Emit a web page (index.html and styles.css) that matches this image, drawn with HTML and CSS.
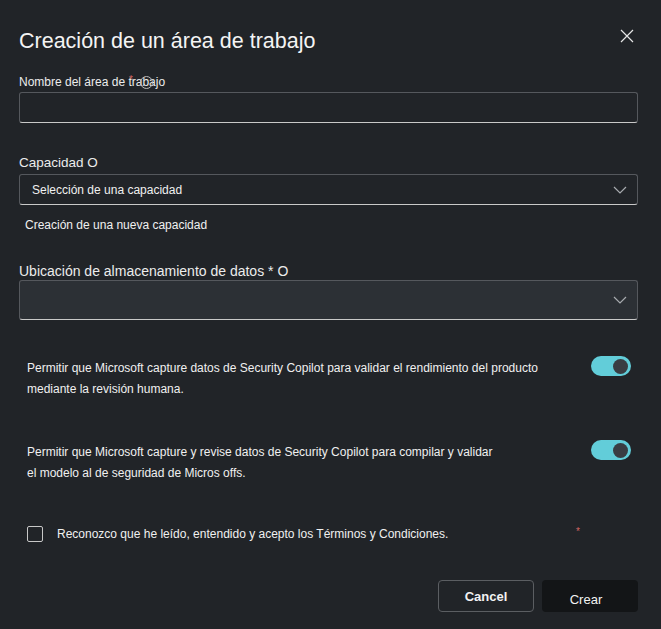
FILE: index.html
```html
<!DOCTYPE html>
<html lang="es">
<head>
  <meta charset="UTF-8">
  <title>Creación de un área de trabajo</title>
  <link rel="stylesheet" href="styles.css">
</head>
<body>
  <div class="dialog">
    <div class="dialog-header">
      <h1 class="dialog-title">Creación de un área de trabajo</h1>
      <button class="close-btn" aria-label="Cerrar">
        <svg width="14" height="14" viewBox="0 0 14 14"><path d="M1 1L13 13M13 1L1 13" stroke="#e6e6e6" stroke-width="1.2" fill="none"/></svg>
      </button>
    </div>

    <!-- Nombre -->
    <div class="field field-name">
      <label class="field-label small">Nombre del área de trabajo
        <span class="req-mark">*</span>
        <span class="info-icon"></span>
      </label>
      <input class="text-input" type="text">
    </div>

    <!-- Capacidad -->
    <div class="field field-capacity">
      <label class="field-label">Capacidad O</label>
      <div class="select">
        <span class="select-value">Selección de una capacidad</span>
        <svg class="chevron" width="14" height="8" viewBox="0 0 14 8"><path d="M1 1L7 7L13 1" stroke="#a8abaf" stroke-width="1.2" fill="none"/></svg>
      </div>
      <div class="helper">Creación de una nueva capacidad</div>
    </div>

    <!-- Ubicacion -->
    <div class="field field-location">
      <label class="field-label large">Ubicación de almacenamiento de datos * O</label>
      <div class="select select-tall">
        <span class="select-value"></span>
        <svg class="chevron" width="14" height="8" viewBox="0 0 14 8"><path d="M1 1L7 7L13 1" stroke="#a8abaf" stroke-width="1.2" fill="none"/></svg>
      </div>
    </div>

    <!-- Toggles -->
    <div class="toggle-row first">
      <p class="toggle-text">Permitir que Microsoft capture datos de Security Copilot para validar el rendimiento del producto<br>mediante la revisión humana.</p>
      <span class="toggle"><span class="knob"></span></span>
    </div>
    <div class="toggle-row second">
      <p class="toggle-text">Permitir que Microsoft capture y revise datos de Security Copilot para compilar y validar<br>el modelo al de seguridad de Micros offs.</p>
      <span class="toggle"><span class="knob"></span></span>
    </div>

    <div class="check-row">
      <span class="checkbox"></span>
      <span class="check-text">Reconozco que he leído, entendido y acepto los Términos y Condiciones.</span>
      <span class="check-req">*</span>
    </div>

    <div class="actions">
      <button class="btn btn-cancel">Cancel</button>
      <button class="btn btn-create">Crear</button>
    </div>
  </div>
</body>
</html>
```

FILE: styles.css
```css
body { margin: 0; background: #212428; color: #f0f0f0; font-family: "Liberation Sans", Arial, sans-serif; }
.dialog { width: 661px; height: 629px; box-sizing: border-box; padding: 0 23px 0 19px; }

.dialog-header { display: flex; justify-content: space-between; align-items: flex-start; padding-top: 29px; }
.dialog-title { margin: 0; font-weight: normal; font-size: 21.5px; line-height: 24px; color: #f4f4f4; }
.close-btn { background: none; border: none; padding: 0; margin: 0 4px 0 0; width: 14px; height: 14px; display: flex; cursor: pointer; }

.field-label { display: block; position: relative; font-size: 13.5px; line-height: 16px; color: #ececec; }
.field-label.small { font-size: 12px; }
.field-label.large { font-size: 14px; }
.req-mark { position: absolute; left: 110px; top: -2px; color: #d06464; font-size: 10px; }
.info-icon { position: absolute; left: 121px; top: 1.5px; width: 11px; height: 11px; border: 1.3px solid #b9b9b9; border-radius: 50%; }

.field-name { margin-top: 21px; }
.field-name .field-label { margin-bottom: 2px; }
.text-input { display: block; width: 100%; height: 31px; box-sizing: border-box; background: transparent; border: 1px solid #55585d; border-bottom-color: #c9c9c9; border-radius: 3px; color: #f0f0f0; }

.field-capacity { margin-top: 32px; }
.field-capacity .field-label { margin-bottom: 3px; }
.select { display: flex; align-items: center; justify-content: space-between; height: 31px; box-sizing: border-box; padding: 0 10px 0 12px; border: 1px solid #55585d; border-bottom-color: #c9c9c9; border-radius: 3px; }
.select-value { font-size: 12px; color: #f0f0f0; }
.select-tall { height: 40px; background: #2c3035; }
.helper { font-size: 12px; margin: 12px 0 0 6px; line-height: 16px; }

.field-location { margin-top: 29px; }
.field-location .field-label { margin-bottom: 0; line-height: 18px; }

.toggle-row { display: flex; justify-content: space-between; align-items: flex-start; padding: 0 7px 0 8px; }
.toggle-row.first { margin-top: 38px; }
.toggle-row.second { margin-top: 42px; }
.toggle-text { margin: 0; font-size: 12px; line-height: 21px; color: #f0f0f0; }
.toggle { display: flex; align-items: center; justify-content: flex-end; width: 40px; height: 20px; margin-top: -2px; box-sizing: border-box; padding: 0 3px; background: #62cdd9; border-radius: 10px; }
.toggle .knob { width: 15px; height: 15px; border-radius: 50%; background: #393d43; }

.check-row { position: relative; display: flex; align-items: center; margin-top: 42px; padding-left: 8px; }
.checkbox { width: 14px; height: 14px; border: 1.5px solid #c8c8c8; border-radius: 2px; margin-right: 14px; }
.check-text { font-size: 12px; line-height: 16px; }
.check-req { position: absolute; left: 557px; top: 0; color: #d06464; font-size: 10px; }

.actions { display: flex; justify-content: flex-end; gap: 8px; margin-top: 38px; }
.btn { width: 96px; height: 32px; box-sizing: border-box; border-radius: 4px; font-family: "Liberation Sans", Arial, sans-serif; font-size: 13px; color: #f2f2f2; cursor: pointer; }
.btn-cancel { background: transparent; border: 1px solid #5b5e62; font-weight: bold; }
.btn-create { background: #131517; border: none; padding: 6px 8px 0 0; }
```
